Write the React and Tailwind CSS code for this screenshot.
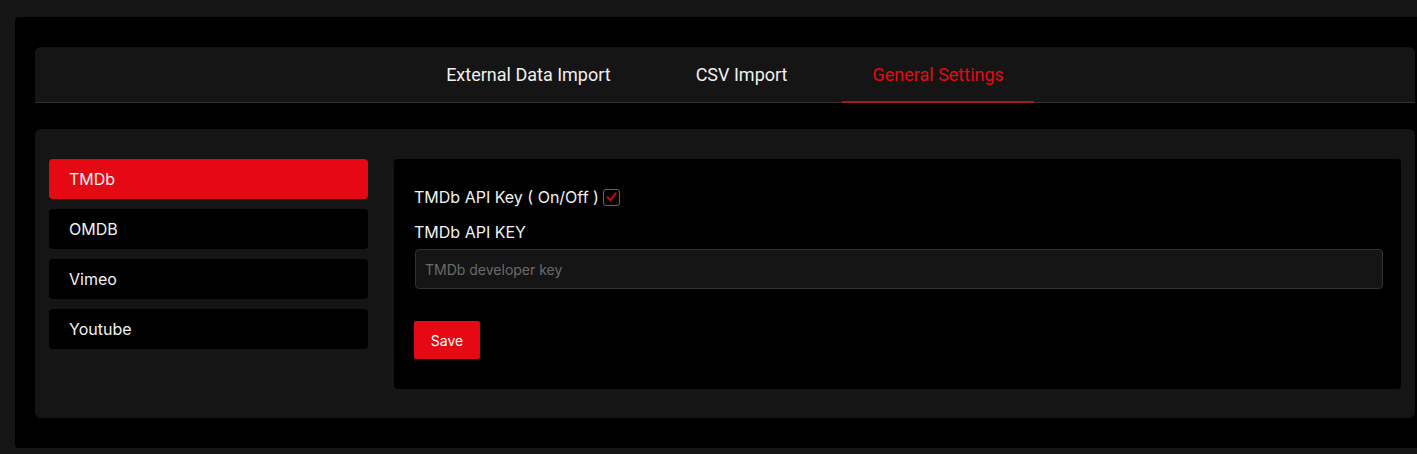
import { useState } from "react";

const tabs = ["External Data Import", "CSV Import", "General Settings"];
const providers = ["TMDb", "OMDB", "Vimeo", "Youtube"];

const App = () => {
    const [activeTab, setActiveTab] = useState(2);
    const [provider, setProvider] = useState(0);
    const [enabled, setEnabled] = useState(true);

    return (
        <div className="min-h-screen bg-[#151515] pt-[17px] pl-[15px] font-['Inter',sans-serif] text-white">
            <div className="bg-black rounded-tl-[4px] rounded-bl-[4px] pt-[30px] pb-[30px] pl-[20px] pr-[2px]">
                {/* Tabs */}
                <div className="bg-[#151515] rounded-t-[6px] border-b border-[#333] h-[56px] flex justify-center gap-[25px]">
                    {tabs.map((tab, i) => (
                        <button
                            key={tab}
                            onClick={() => setActiveTab(i)}
                            className={`px-[30px] font-['Roboto',sans-serif] text-[18px] border-b-2 -mb-px ${
                                activeTab === i
                                    ? "text-[#e50914] border-[#a01a20]"
                                    : "text-[#f0f0f0] border-transparent"
                            }`}
                        >
                            {tab}
                        </button>
                    ))}
                </div>

                {/* Settings card */}
                <div className="mt-[26px] bg-[#151515] rounded-[6px] pt-[30px] pb-[29px] px-[14px] flex gap-[26px] items-start">
                    <div className="w-[319px] flex flex-col gap-[10px]">
                        {providers.map((p, i) => (
                            <button
                                key={p}
                                onClick={() => setProvider(i)}
                                className={`h-[40px] rounded-[4px] pl-[20px] text-left text-[16px] text-[#f2f2f2] ${
                                    provider === i ? "bg-[#e50914]" : "bg-black"
                                }`}
                            >
                                {p}
                            </button>
                        ))}
                    </div>

                    <div className="flex-1 bg-black rounded-[4px] h-[230px] pt-[26px] pl-[20px] pr-[19px]">
                        <label className="flex items-center gap-[4px] text-[16px] text-[#f2f2f2] h-[24px]">
                            {providers[provider]} API Key ( On/Off )
                            <span
                                onClick={() => setEnabled(!enabled)}
                                className="w-[17px] h-[17px] rounded-[3px] border border-[#666] flex items-center justify-center"
                            >
                                {enabled && (
                                    <svg width="11" height="10" viewBox="0 0 11 10">
                                        <path d="M1.5 5.2 L4.3 8.2 L9.6 1.4" fill="none" stroke="#d0021b" strokeWidth="2" strokeLinecap="round" strokeLinejoin="round" />
                                    </svg>
                                )}
                            </span>
                        </label>
                        <div className="mt-[11px] text-[16px] text-[#f2f2f2] h-[24px]">{providers[provider]} API KEY</div>
                        <input
                            className="mt-[5px] ml-px w-full h-[40px] bg-[#151515] border border-[#333] rounded-[4px] px-[9px] text-[14px] text-white placeholder:text-[#6a6a6a] outline-none"
                            placeholder={`${providers[provider]} developer key`}
                        />
                        <button className="mt-[32px] w-[66px] h-[38px] bg-[#e50914] rounded-[2px] text-[14px] text-white">
                            Save
                        </button>
                    </div>
                </div>
            </div>
        </div>
    );
};

export default App;
